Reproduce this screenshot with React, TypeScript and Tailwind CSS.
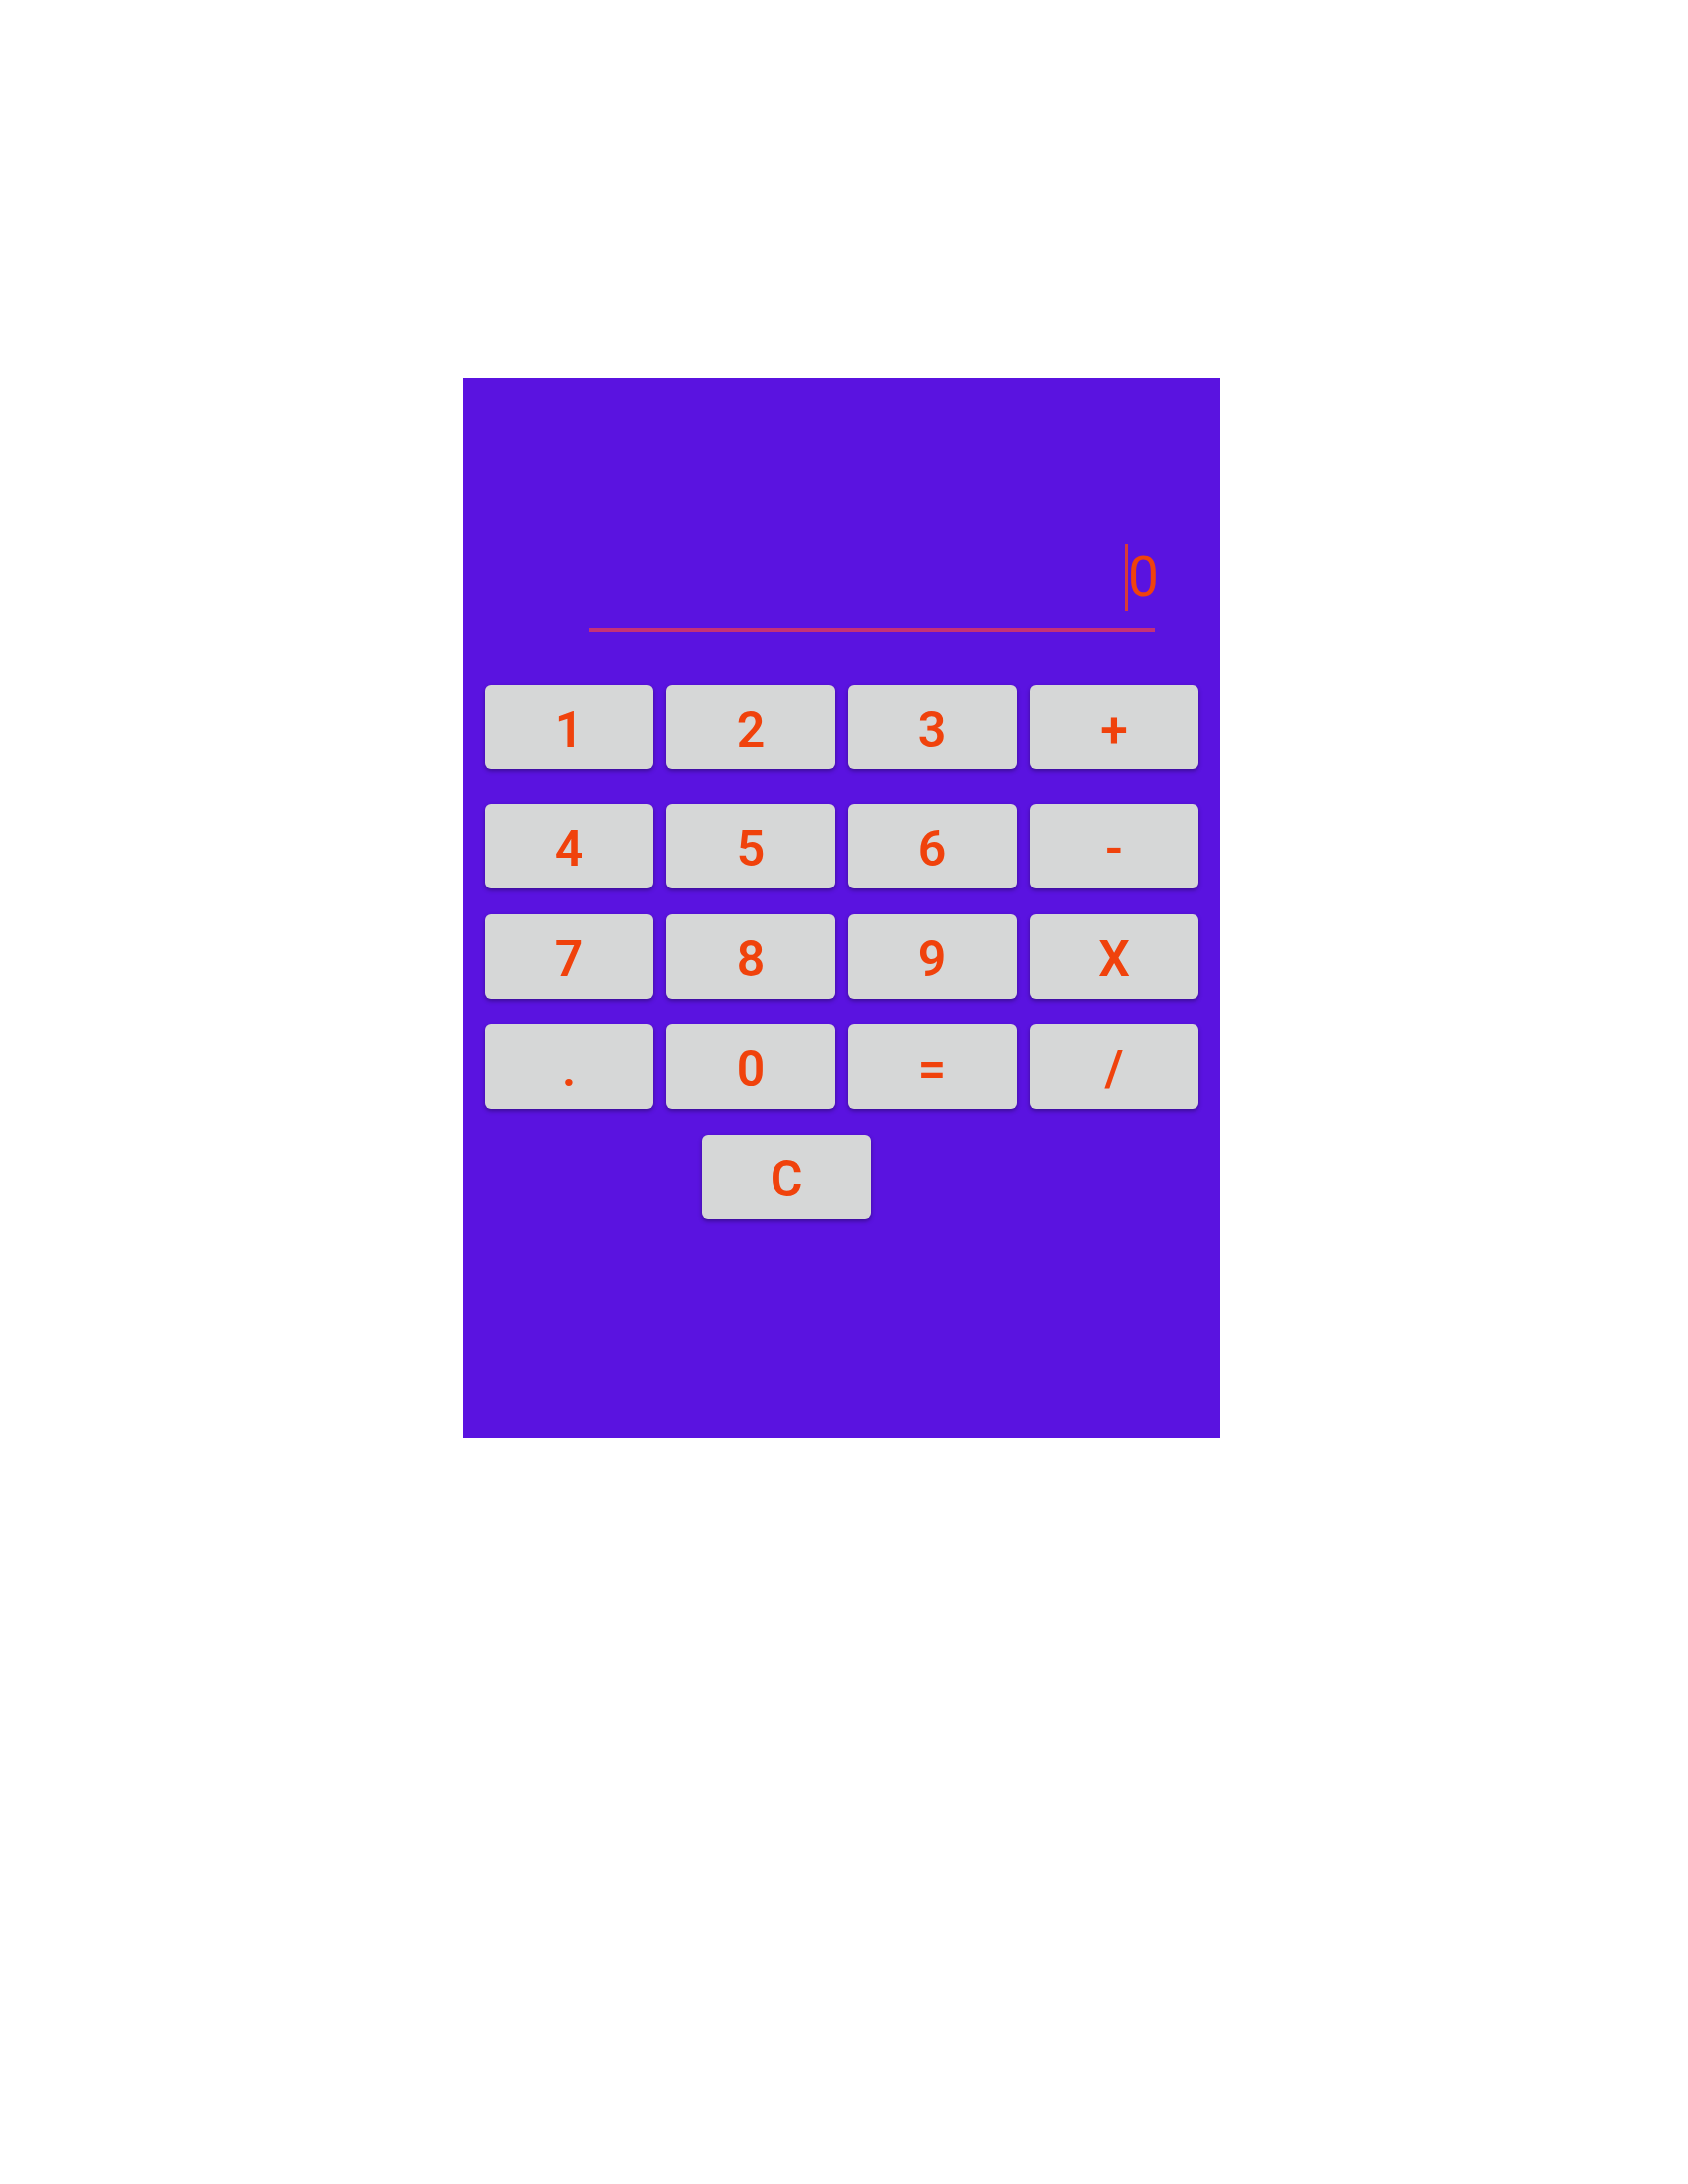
import { FC } from 'react'

const rows: string[][] = [
    ['1', '2', '3', '+'],
    ['4', '5', '6', '-'],
    ['7', '8', '9', 'X'],
    ['.', '0', '=', '/'],
]

interface IKey {
    label: string
}

const Key: FC<IKey> = ({ label }) => {
    return (
        <button className="flex h-[85px] w-[170px] items-center justify-center rounded-[6px] bg-[#d6d7d7] pt-[5px] text-[50px] font-semibold leading-none text-[#f0420c] shadow-[0_2px_4px_rgba(0,0,0,0.35)]">
            {label}
        </button>
    )
}

const App: FC = () => {
    return (
        <div className="min-h-[2200px] bg-white pl-[466px] pt-[381px] font-['Roboto',sans-serif]">
            <div className="flex h-[1068px] w-[763px] flex-col bg-[#5a13e0]">
                <div className="ml-[127px] mt-[167px] flex h-[67px] w-[574px] items-center justify-end">
                    <div className="h-[67px] w-[3px] bg-[#d83a3a]"></div>
                    <span className="h-[55px] text-[55px] font-normal leading-[55px] text-[#f0420c]">0</span>
                </div>
                <div className="ml-[127px] mt-[18px] h-[4px] w-[570px] bg-[#c53276]"></div>

                <div className="ml-[22px] mt-[53px] flex flex-col">
                    {rows.map((row, i) => (
                        <div key={i} className={i === 0 ? 'flex gap-[13px]' : i === 1 ? 'mt-[35px] flex gap-[13px]' : 'mt-[26px] flex gap-[13px]'}>
                            {row.map(k => (
                                <Key key={k} label={k} />
                            ))}
                        </div>
                    ))}
                    <div className="ml-[219px] mt-[26px] flex">
                        <Key label="C" />
                    </div>
                </div>
            </div>
        </div>
    )
}

export default App
